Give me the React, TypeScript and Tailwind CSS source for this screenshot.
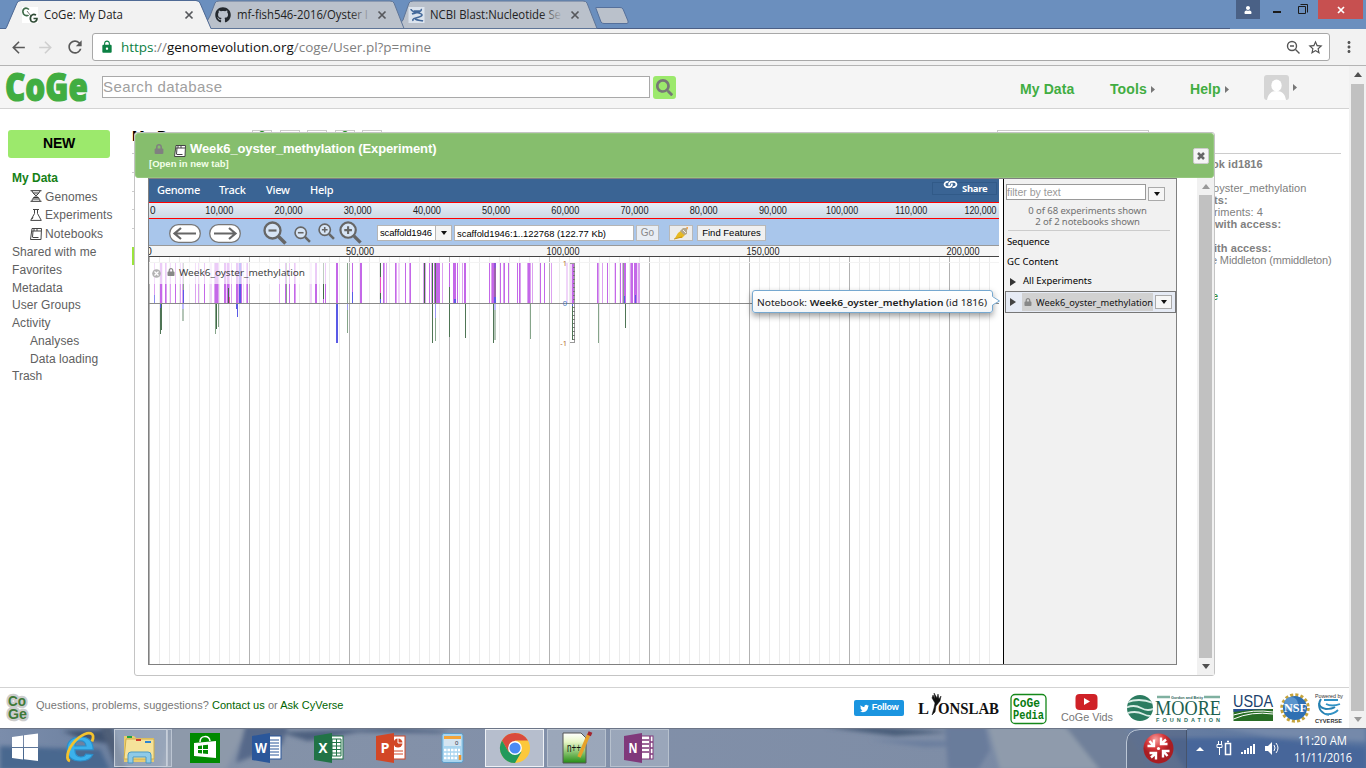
import React from "react";
import { FaLock, FaSearch, FaGithub, FaTwitter, FaUser, FaLink } from "react-icons/fa";
import { MdArrowBack, MdArrowForward, MdRefresh, MdLock, MdStarBorder, MdMoreVert } from "react-icons/md";

const ARIAL = "font-['Liberation_Sans',sans-serif]";
const SEGOE = "font-['Open_Sans',sans-serif]";
const NOTO = "font-['Noto_Sans',sans-serif]";

type FitProps = { x: number; y: number; w?: number; size: number; fill?: string; bold?: boolean; family?: string; children: string; anchor?: "start" | "middle" | "end" };
const Fit = ({ x, y, w, size, fill = "#222", bold, family = "Liberation Sans", children, anchor = "start" }: FitProps) => (
  <text x={x} y={y} fontSize={size} fill={fill} fontWeight={bold ? 700 : 400} fontFamily={`${family}, sans-serif`} textAnchor={anchor} textLength={w} lengthAdjust="spacingAndGlyphs">
    {children}
  </text>
);

function TabBar() {
  return (
    <div className="h-[29px] bg-[#6b8fbe] flex justify-between">
      <svg width="1230" height="29" viewBox="0 0 1230 29">
        <defs>
          <linearGradient id="fade1" x1="0" x2="1"><stop offset="0" stopColor="#bac1cb" stopOpacity="0" /><stop offset="1" stopColor="#bac1cb" /></linearGradient>
        </defs>
        <path d="M0 28.500H1230" stroke="#4b5f86" />
        <path d="M396 28.500 403 20 409 3 Q410 1 413 1 H583 Q586 1 587 3 L597 28.500Z" fill="#bac1cb" stroke="#5f7597" />
        <path d="M203 28.500 210 16 215 3 Q216 1 219 1 H390 Q393 1 394 3 L404 28.500Z" fill="#bac1cb" stroke="#5f7597" />
        <path d="M0 29 H6 L17 3 Q18 1 21 1 H196 Q199 1 200 3 L211 29 Z" fill="#f2f2f2" />
        <path d="M0 28.500 H6 L17 3 Q18 .500 21 .500 H196 Q199 .500 200 3 L211 28.500" fill="none" stroke="#4f6a95" />
        <path d="M6.500 28.500H210" stroke="#f2f2f2" strokeWidth="1.500" />
        <path d="M596 8.500 Q595 7.500 597 7.500 H620 Q622 7.500 623 9 L628 21 Q628.500 23.500 627 23.500 H604 Q602 23.500 601 22Z" fill="#bac1cb" stroke="#55709b" />
        <rect x="22" y="7" width="16" height="16" fill="#fff" />
        <path d="M29 9.500 C25 6 21.500 10 23.500 14 C25 16 28 16 28.500 15" fill="none" stroke="#3f6b4a" strokeWidth="1.600" />
        <path d="M27 11l4 5" stroke="#777" />
        <path d="M36 15 C32 13 29 17 31 21 C33 23 37 22 37 18.500 H33.500" fill="none" stroke="#2f4b35" strokeWidth="1.600" />
        <Fit x={44} y={19} w={79} size={12} family="Open Sans" fill="#222">CoGe: My Data</Fit>
        <Fit x={237} y={19} w={131} size={12} family="Open Sans">mf-fish546-2016/Oyster I</Fit>
        <Fit x={430} y={19} w={131} size={12} family="Open Sans">NCBI Blast:Nucleotide Se</Fit>
        <rect x="350" y="5" width="22" height="20" fill="url(#fade1)" />
        <rect x="541" y="5" width="22" height="20" fill="url(#fade1)" />
        {[189, 382, 575].map((x) => (
          <path key={x} d={`M${x - 3.500} 11.500l7 7m0-7l-7 7`} stroke="#56585c" strokeWidth="1.700" />
        ))}
        <rect x="408.500" y="7" width="16" height="16" fill="#dce4ee" />
        <path d="M411 9c0 4 11 3 11 6s-11 2-9 6M421 9c2 3-7 4-9 5m2-3h7m-6 8c3 2 6 1 8 2" stroke="#44699a" strokeWidth="1.600" fill="none" />
        <g transform="translate(215 7)"><FaGithub size={16} color="#24292e" /></g>
      </svg>
      <div className="flex items-start">
        <div className="w-6 h-[19px] bg-[#4a6186] grid place-items-center mr-2.5"><FaUser size={8} color="white" /></div>
        <svg width="48" height="19"><path d="M3 12H11" stroke="#1b1b1b" strokeWidth="2" /><path d="M28.500 6.500h7v7h-7zM30.500 4.500h7v8" fill="none" stroke="#1b1b1b" /></svg>
        <div className={`w-[45px] h-[19px] bg-[#c75050] text-white grid place-items-center mr-[3px] ${SEGOE}`}>
          <svg width="8" height="8"><path d="M1 1l6 6m0-6L1 7" stroke="white" strokeWidth="1.700" /></svg>
        </div>
      </div>
    </div>
  );
}

function Toolbar() {
  return (
    <div className="h-[37px] bg-[#f2f2f2] border-b border-[#b4b4b4] flex items-center pl-[9px]">
      <MdArrowBack size={19} color="#5a5a5a" />
      <MdArrowForward size={19} color="#cfcfcf" className="ml-[8px]" />
      <MdRefresh size={20} color="#5a5a5a" className="ml-2.5" />
      <div className="ml-[7px] w-[1238px] h-7 bg-white border border-[#a8a8a8] rounded-[3px] flex items-center pl-[7px] pr-[5px]">
        <MdLock size={14} color="#0b8043" />
        <svg width="320" height="24" className="ml-[6px]">
          <text x="1" y="17" fontSize="13.500" fontFamily="Open Sans, sans-serif" fill="#808080" textLength="310" lengthAdjust="spacingAndGlyphs">
            <tspan fill="#0b8043">https</tspan>://<tspan fill="#111">genomevolution.org</tspan>/coge/User.pl?p=mine
          </text>
        </svg>
        <div className="grow" />
        <svg width="15" height="15" viewBox="0 0 15 15" fill="none" stroke="#555" strokeWidth="1.400"><circle cx="6" cy="6" r="4.500" /><path d="M9.500 9.500l4 4M4 6h4" /></svg>
        <MdStarBorder size={17} color="#505050" className="ml-1.5" />
      </div>
      <MdMoreVert size={18} color="#555" className="ml-[10px]" />
    </div>
  );
}

const Tri = () => <svg width="4" height="7"><path d="M0 0 4 3.500 0 7z" fill="#777" /></svg>;

function AppHeader() {
  return (
    <div className={`h-[43px] bg-[#f5f5f5] border-b border-[#d3d3d3] flex items-start ${ARIAL}`}>
      <svg width="98" height="42" className="overflow-visible">
        <text x="5" y="34.500" fontSize="39" fontWeight="800" fontFamily="Open Sans, sans-serif" fill="#41ad41" stroke="#41ad41" strokeWidth="1.200" paintOrder="stroke" textLength="83" lengthAdjust="spacingAndGlyphs">CoGe</text>
      </svg>
      <div className="ml-1 mt-[10px] w-[548px] h-[22px] bg-white border border-[#a9a9a9] text-[15px] leading-[20px] tracking-[0.400px] text-[#a0a0a0]">Search database</div>
      <div className="ml-[3px] mt-[10px] w-[23px] h-[23px] rounded-[3px] bg-[#9ce96c] grid place-items-center"><FaSearch size={17} color="#777" /></div>
      <div className="ml-[344px] mt-3 flex items-center text-[14px] font-bold text-[#41ad41] leading-5">
        <span className="w-[90px] tracking-[0.100px]">My Data</span>
        <span className="w-[80px] flex items-center gap-1 tracking-[0.100px]">Tools<Tri /></span>
        <span className="w-[74px] flex items-center gap-1 tracking-[0.100px]">Help<Tri /></span>
        <span className="flex items-center gap-[4px] -mt-[3px]">
          <svg width="25" height="25"><rect width="25" height="25" rx="3" fill="#d5d5d5" /><ellipse cx="12.500" cy="10.500" rx="5.200" ry="6" fill="#fff" /><path d="M3 25c1-6 4-9 9.500-9s8.500 3 9.500 9z" fill="#fff" /></svg>
          <Tri />
        </span>
      </div>
    </div>
  );
}

const NotebookIcon = ({ c = "#444", bg = "none" }: { c?: string; bg?: string }) => (
  <svg width="12" height="12" viewBox="0 0 12 12" fill={bg} stroke={c}><path d="M2 .5h9.500L11 11.500H.5L2 .5" /><path d="M2 3h9M4 .5v2.500M7 .5v2.500M2.500 9.500h6M3 3 2.500 9" fill="none" /></svg>
);
const GenomeIcon = () => <svg width="12" height="12" fill="none" stroke="#333"><path d="M.5.700h11M.5 11.300h11M2 1c1 4 8 6 8 10M10 1c-1 4-8 6-8 10M3 3h6M3 9h6M3.500 7.500h5" /></svg>;
const FlaskIcon = () => <svg width="12" height="12" fill="none" stroke="#444"><path d="M3 .5h6M4.500.5v4L.7 11.400h10.600L7.500 4.500v-4M3 8l-1 2" /></svg>;

function Sidebar() {
  return (
    <div className={`w-[132px] shrink-0 ${ARIAL}`}>
      <div className="ml-2 mt-[21px] w-[102px] h-7 rounded-[3px] bg-[#9ce96c] text-black text-[14px] font-bold text-center leading-[27px]"><span className="tracking-[-0.300px]">NEW</span></div>
      <div className="mt-[10px] pl-3 text-[12px] text-[#606060] whitespace-nowrap">
        <div className="h-[18px] leading-5 font-bold text-[#158015]">My Data</div>
        <div className="h-[19px] flex items-center gap-[3px] pl-[18px]"><GenomeIcon /><span className="pt-[3px] tracking-[0.080px]">Genomes</span></div>
        <div className="h-[19px] flex items-center gap-[3px] pl-[18px]"><FlaskIcon /><span className="pt-px tracking-[0.080px]">Experiments</span></div>
        <div className="h-[19px] flex items-center gap-[3px] pl-[18px]"><NotebookIcon /><span className="pt-px tracking-[0.080px]">Notebooks</span></div>
        {["Shared with me", "Favorites", "Metadata", "User Groups", "Activity"].map((t) => <div key={t} className="h-[17.800px] leading-[18px] tracking-[0.080px]">{t}</div>)}
        {["Analyses", "Data loading"].map((t) => <div key={t} className="h-[17.800px] leading-[18px] pl-[18px] tracking-[0.080px]">{t}</div>)}
        <div className="leading-[17px]">Trash</div>
      </div>
    </div>
  );
}

function Behind() {
  return (
    <>
      <div className={`w-[866px] flex items-start pt-[20px] ${ARIAL}`}>
        <div className="w-[5px]">
          <div className="-mt-px text-[15px] font-bold leading-4 text-black h-[25px] whitespace-nowrap">My D</div>
          {[0, 1, 2, 3, 4].map((i) => <div key={i} className="h-[18.800px] border-t border-[#ccc]" />)}
          <div className="h-[18px] bg-[#9be43c]" />
        </div>
        <div className="ml-[115px] mt-px flex gap-[7.500px]">
          {[0, 1, 2, 3, 4].map((i) => <div key={i} className="w-5 h-4 border border-[#ccc] flex justify-center">{(i === 0 || i === 3) && <i className="block w-[6px] h-2 border-t-2 border-[#188a18] rounded-t" />}</div>)}
        </div>
      </div>
      <div className={`w-[351px] pt-[21px] text-[11px] text-[#808080] whitespace-nowrap ${ARIAL}`}>
        <div className="w-[152px] h-[22px] ml-[-1px] border border-[#ccc]" />
        <div className="ml-[200px] mt-px border-t border-[#ccc] w-[143px]" />
        <div className="ml-[216px] leading-[12px] pt-[4px] tracking-[0.060px]">
          <div className="font-bold -ml-[2px]">ok id1816</div>
          <div className="mt-3 -ml-[1px]">oyster_methylation</div>
          <div className="font-bold">ts:</div>
          <div>riments: 4</div>
          <div className="font-bold ml-px">with access:</div>
          <div className="font-bold mt-3">ith access:</div>
          <div className="-ml-[3px] tracking-[-0.150px]">e Middleton (mmiddleton)</div>
          <div className="text-[#158015] mt-6 -ml-[2px]">e</div>
        </div>
      </div>
    </>
  );
}

const S = "#c468e8", L = "#dca2f0", P = "#f0d5f9", G = "#4f7555", LG = "#b4c5b7", MG = "#86a58a", B = "#5a5ae6", D = "#416b48";
const up: [number, number, string][] = [
  [154, 1, L], [160, 2, S], [162, 1, P], [165, 1, S], [166, 1, L], [170, 1, L], [175, 1, S], [180, 1, L], [182, 1, L], [183, 1, MG], [195, 1, L], [198, 1, L], [204, 1, S], [210, 2, P],
  [214, 1, L], [215, 3, S], [218, 1, L], [224, 2, S], [226, 1, P], [227, 2, S], [229, 1, L], [231, 1, L], [236, 2, S], [238, 1, L], [239, 2, B], [241, 1, S], [243, 1, P], [246, 1, L], [247, 1, S],
  [279, 1, L], [285, 1, S], [286, 1, MG], [289, 1, S], [294, 1, S], [295, 1, L], [310, 2, P], [315, 2, S], [323, 1, D], [325, 1, S], [336, 2, S], [347, 1, MG], [352, 1, S], [360, 2, S],
  [380, 1, D], [383, 1, S], [384, 1, L], [386, 1, L], [395, 1, S], [396, 1, L], [398, 2, P], [405, 1, S], [409, 1, L], [410, 1, S], [423, 1, L], [424, 1, D], [425, 1, L], [429, 1, S], [431, 1, L], [432, 1, D],
  [434, 1, S], [435, 1, G], [436, 4, S], [442, 1, L], [449, 1, S], [453, 3, S], [457, 1, S], [462, 1, L], [464, 2, S], [489, 1, S], [491, 1, L], [492, 2, S], [494, 2, "#9b64ac"], [500, 1, S], [503, 1, L], [504, 1, S], [508, 1, S],
  [517, 1, S], [519, 1, S], [520, 1, L], [527, 1, L], [528, 2, S], [530, 1, L], [532, 1, L], [540, 1, S], [544, 1, S], [551, 1, L], [566, 2, P], [570, 2, P], [572, 3, S],
  [597, 1, S], [598, 1, L], [602, 1, L], [607, 1, S], [614, 1, P], [615, 1, S], [620, 1, S], [622, 1, L], [623, 1, MG], [624, 2, S], [630, 1, L], [631, 2, S], [634, 1, S], [635, 2, S], [637, 1, P], [638, 2, L],
];
const down: [number, number, number, string][] = [
  [160, 1, 334, G], [161, 1, 330, G], [182, 2, 321, LG], [215, 1, 334, MG], [216, 1, 329, D], [218, 1, 327, MG], [236, 1, 309, B], [237, 1, 317, B], [336, 2, 343, B], [347, 1, 333, MG],
  [432, 1, 343, G], [435, 1, 341, MG], [449, 1, 337, G], [465, 1, 338, G], [493, 1, 343, G], [494, 2, 340, LG], [530, 1, 339, MG], [572, 1, 340, G], [598, 1, 343, MG], [625, 1, 328, G],
];
const spots: [number, number, number, number, string][] = [
  [154, 295, 1, 8, "#8a8af0"], [183, 290, 1, 13, B], [228, 288, 1, 15, D], [229, 297, 1, 6, "#e650b4"], [323, 299, 1, 4, S], [352, 292, 1, 11, B], [380, 277, 1, 16, "#ea50c0"], [380, 299, 1, 4, B],
  [449, 287, 1, 16, G], [454, 299, 2, 4, B], [494, 263, 2, 5, "#8e55d8"], [494, 297, 2, 6, B], [624, 296, 1, 7, B], [635, 295, 1, 8, B], [160, 304, 1, 4, B], [182, 304, 2, 5, "#bcbcff"], [347, 304, 1, 6, "#9a9af2"], [435, 304, 1, 14, "#9a9af2"], [494, 304, 2, 6, "#bcbcff"], [572, 304, 1, 2, B],
];
const ticks = Array.from({ length: 19 }, (_, i) => 267 + i * 4);

function TrackChart() {
  return (
    <svg width="850" height="407" viewBox="149 257 850 407" shapeRendering="crispEdges" className="block bg-white">
      {Array.from({ length: 85 }, (_, i) => <rect key={i} x={149 + i * 10} y="257" width="1" height="408" fill={i % 10 ? "#ebebeb" : "#b2b2b2"} />)}
      <rect x="149" y="262" width="850" height="1" fill="#f3f3f3" />
      {up.map(([x, w, c]) => <rect key={x} x={x} y="263" width={w} height="40" fill={c} />)}
      {down.map(([x, w, b, c]) => <rect key={x} x={x} y="304" width={w} height={b - 304} fill={c} />)}
      {spots.map(([x, y, w, h, c], i) => <rect key={i} x={x} y={y} width={w} height={h} fill={c} />)}
      <rect x="149" y="303" width="850" height="1" fill="#8a8a8a" />
      <rect x="574" y="263" width="1" height="80" fill="#999" />
      <rect x="570" y="263" width="5" height="1" fill="#999" /><rect x="570" y="342" width="5" height="1" fill="#999" />
      {ticks.map((y) => <rect key={y} x="573" y={y} width="2" height="1" fill="#777" />)}
      <Fit x={567} y={266} size={7.500} anchor="end" fill="#b06b35" family="Noto Sans">1</Fit>
      <Fit x={567} y={305.500} size={7.500} anchor="end" fill="#3f78c0" family="Noto Sans">0</Fit>
      <Fit x={567} y={345.500} size={7.500} anchor="end" fill="#b06b35" family="Noto Sans">-1</Fit>
      <rect x="149" y="263" width="180" height="21" fill="#fff" fillOpacity=".66" />
      <g shapeRendering="auto">
        <circle cx="156.500" cy="273.500" r="4.300" fill="#b3b3b3" />
        <path d="M154.500 271.500l4 4m0-4l-4 4" stroke="#fff" strokeWidth="1.300" />
        <g transform="translate(167 268)"><FaLock size={8} color="#888" /></g>
        <Fit x={179} y={276} w={126} size={9.500} fill="#444" family="Noto Sans">Week6_oyster_methylation</Fit>
      </g>
    </svg>
  );
}

const Mag = ({ s, plus }: { s: number; plus?: boolean }) => (
  <svg width={s} height={s} viewBox="0 0 24 24" fill="none" stroke="#666"><circle cx="9.500" cy="9.500" r="8" strokeWidth="2.300" fill="#d7e5f6" /><path d="M15.500 15.500l7 7" strokeWidth="3.500" /><path d={plus ? "M5.500 9.500h8M9.500 5.500v8" : "M5.500 9.500h8"} strokeWidth="2.200" /></svg>
);
const Pill = ({ flip }: { flip?: boolean }) => (
  <svg width="32" height="19" viewBox="0 0 32 19" className={flip ? "-scale-x-100" : ""}><rect x=".7" y=".7" width="30.600" height="17.600" rx="8.800" fill="#fff" stroke="#777" strokeWidth="1.300" /><path d="M27 9.500H6M12 4 5.500 9.500 12 15" fill="none" stroke="#666" strokeWidth="2.200" /></svg>
);
const Down = () => <svg width="6" height="4"><path d="M0 0h6L3 4z" fill="#111" /></svg>;
const DropBtn = () => <div className="w-[17px] h-[14px] border border-[#aaa] bg-[#f6f6f6] grid place-items-center"><Down /></div>;

function Browser() {
  return (
    <div className="w-[850px] shrink-0">
      <div className={`h-[23px] bg-[#3a6494] text-white text-[11px] font-medium tracking-[-0.280px] leading-[22px] flex pl-2 ${NOTO}`}>
        <span className="w-[62px]">Genome</span><span className="w-[47px]">Track</span><span className="w-[44px]">View</span><span>Help</span>
        <div className="ml-auto w-[65px] h-[13px] mt-[3px] border border-[#315a88] flex mr-[2px] pl-[11px]">
          <FaLink size={13} className="-mt-[5px] rotate-45 scale-90" />
          <span className="ml-[5px] text-[9.500px] font-bold leading-[12px]">Share</span>
        </div>
      </div>
      <svg width="850" height="17" viewBox="149 202 850 17" className="block">
        <defs><linearGradient id="ov" x2="0" y2="1"><stop stopColor="#e5eef8" /><stop offset="1" stopColor="#ccd9e5" /></linearGradient></defs>
        <rect x="149" y="202" width="850" height="17" fill="#f00" /><rect x="149" y="203" width="850" height="15" fill="url(#ov)" />
        <Fit x={150} y={214} size={10}>0</Fit>
        {Array.from({ length: 12 }, (_, i) => <Fit key={i} x={219.300 + i * 69.200} y={214} size={10} w={i < 9 ? 28 : 32} anchor="middle">{`${i + 1}0,000`}</Fit>)}
      </svg>
      <div className={`h-[26px] bg-[#a9c6eb] flex items-center pl-5 pt-[2px] text-[9.500px] text-black whitespace-nowrap ${ARIAL}`}>
        <Pill /><div className="w-2" /><Pill flip />
        <div className="flex items-center ml-[22px]"><Mag s={24} /><div className="w-[7px]" /><div className="pt-[3px]"><Mag s={17} /></div><div className="w-[7px]" /><div className="pb-[3px]"><Mag s={17} plus /></div><div className="w-1" /><div className="pb-[2px]"><Mag s={23} plus /></div></div>
        <div className="ml-[15px] w-[75px] h-4 bg-white border border-[#b5b5b5] flex"><span className="w-[57px] pl-[2px] leading-[14px] tracking-[-0.150px]">scaffold1946</span><span className="w-4 border-l border-[#b5b5b5] bg-[#f4f4f4] grid place-items-center"><Down /></span></div>
        <div className="ml-[2px] w-[180px] h-4 bg-white border border-[#b5b5b5] pl-[2px] leading-[15px]"><svg width="156" height="14" className="block"><Fit x={0} y={10.500} w={149} size={9.500} fill="#000">scaffold1946:1..122768 (122.77 Kb)</Fit></svg></div>
        <div className="ml-[2px] w-[23px] h-4 border border-[#bbb] bg-[#e8edf4] text-[#888] text-[10px] text-center leading-[14px]">Go</div>
        <div className="ml-[10px] w-6 h-4 border border-[#b8b8b8] bg-[#ececec] grid place-items-center">
          <svg width="15" height="13"><path d="M1 11 4 6 8 3l4 4-4 4z" fill="#e7b923" /><path d="M6 4 9 1h4v6l-3 1z" fill="#b4a78c" /><path d="M9 3l3 3" stroke="#eee" /><path d="M12 0h2v3z" fill="#f8a548" /><path d="M0 12 8 10" stroke="#c9950e" /></svg>
        </div>
        <div className="ml-1 w-[69px] h-4 border border-[#b8b8b8] bg-[#f0f0f0] text-[9.500px] text-center leading-[14px]">Find Features</div>
      </div>
      <svg width="850" height="12" viewBox="149 245 850 12" className="block">
        <rect x="149" y="245" width="850" height="12" fill="#f6f6f6" /><path d="M149 245.500h850" stroke="#999" /><path d="M149 256.500h850" stroke="#444" />
        <Fit x={149} y={255} size={10} anchor="middle">0</Fit>
        {[50, 100, 150, 200].map((v, i) => <Fit key={v} x={[360, 563, 763, 963][i]} y={255} size={10} w={i ? 33 : 28} anchor="middle">{`${v},000`}</Fit>)}
      </svg>
      <TrackChart />
    </div>
  );
}

function TrackPanel() {
  return (
    <div className={`w-[173px] shrink-0 ml-1 bg-[#f1f1f1] border-l border-black text-black text-[9.500px] ${NOTO}`}>
      <div className="flex pl-[2px] pt-[5px] items-start">
        <div className={`w-[140px] h-4 border border-[#999] bg-white text-[#999] text-[10.500px] leading-[15px] ${ARIAL}`}>filter by text</div>
        <div className="ml-[2px] mt-[3px]"><DropBtn /></div>
      </div>
      <div className="mt-1 text-center text-[#707070] leading-[11px] pr-[3px] h-[26px] border-b border-[#ccc] ml-1 mr-[6px] tracking-[-0.080px]">0 of 68 experiments shown<br />2 of 2 notebooks shown</div>
      <div className="pl-[3px] h-5 leading-[21px] tracking-[-0.130px]">Sequence</div>
      <div className="pl-[3px] h-5 leading-[21px]">GC Content</div>
      <div className="pl-1.5 h-5 flex items-center tracking-[-0.050px] pt-px"><svg width="6" height="8"><path d="M0 0 6 4 0 8z" fill="#333" /></svg><span className="ml-[7px]">All Experiments</span></div>
      <div className="h-[22px] ml-px border border-[#777] bg-[#e6ebf5] flex items-center pl-1 whitespace-nowrap">
        <svg width="6" height="8" className="shrink-0"><path d="M0 0 6 4 0 8z" fill="#444" /></svg>
        <div className="ml-1.5 w-[131px] h-[18px] bg-[#d1d1d1] flex items-center pl-[2px] shrink-0"><FaLock size={8} color="#888" /><svg width="118" height="16" className="ml-1"><Fit x={0} y={11.500} w={117} size={9.500} fill="#111" family="Noto Sans">Week6_oyster_methylation</Fit></svg></div>
        <div className="ml-[2px] shrink-0"><DropBtn /></div>
      </div>
    </div>
  );
}

function Modal() {
  return (
    <div className="absolute left-[134px] top-[132px] w-[1081px] h-[544px] bg-white border border-[#c4c4c4] rounded-[3px] flex flex-col">
      <div className={`h-[45px] shrink-0 bg-[#86be6d] border border-[#95c77e] rounded-[3px] flex text-white font-bold ${ARIAL}`}>
        <div className="grow pl-[13px] pt-[6px]">
          <div className="h-[18px] flex items-center"><FaLock size={10} color="#808080" className="ml-[5px]" /><span className="ml-[10px] mt-[3px]"><NotebookIcon c="#444" bg="#fff" /></span><span className="ml-1 text-[13px] leading-4 tracking-[-0.110px]">Week6_oyster_methylation (Experiment)</span></div>
          <div className="text-[9.500px] leading-[12px] text-[#f2ffe8]">[Open in new tab]</div>
        </div>
        <div className="w-4 h-4 mt-[14px] mr-[4px] bg-[#f5f5f5] border border-[#ccc] rounded-[2px] grid place-items-center"><svg width="8" height="8"><path d="M1 1l6 6m0-6L1 7" stroke="#666" strokeWidth="2.500" /></svg></div>
      </div>
      <div className="flex grow min-h-0">
        <div className="ml-[13px] w-[1029px] h-[487px] border border-[#808080] flex">
          <Browser />
          <TrackPanel />
        </div>
        <div className="ml-auto w-[17px] bg-[#f1f1f1] flex flex-col items-center justify-between py-[6px]">
          <svg width="8" height="5"><path d="M0 5h8L4 0z" fill="#999" /></svg>
          <div className="w-[13px] grow my-[6px] bg-[#c1c1c1]" />
          <svg width="8" height="5"><path d="M0 0h8L4 5z" fill="#505050" /></svg>
        </div>
      </div>
    </div>
  );
}

function Tooltip() {
  return (
    <div className={`absolute left-[752px] top-[290px] w-[248px] h-6 ${NOTO}`}>
      <div className="w-[241px] h-[23px] bg-gradient-to-b from-white to-[#f4f6f8] border border-[#76a8d0] rounded-[3px] shadow-[0_3px_6px_rgba(0,0,0,0.4)]">
        <svg width="239" height="21" className="block"><text x="4" y="15" fontSize="9.500" fontFamily="Noto Sans, sans-serif" fill="#222" textLength="230" lengthAdjust="spacingAndGlyphs">Notebook: <tspan fontWeight="600">Week6_oyster_methylation</tspan> (id 1816)</text></svg>
      </div>
      <svg className="absolute left-[240px] top-[5px]" width="9" height="12"><path d="M0 0h1v1L8 6 1 10v2H0z" fill="#fff" /><path d="M.5 0v1.500L7.500 6 .5 10v2" fill="none" stroke="#76a8d0" /></svg>
    </div>
  );
}

function Footer() {
  return (
    <div className={`h-[41px] shrink-0 border-t border-[#d3d3d3] flex items-center text-[11px] text-[#777] whitespace-nowrap ${ARIAL}`}>
      <svg width="30" height="38" className="ml-1">
        <g stroke="#cdcdcd" strokeWidth="4.500" strokeLinejoin="round" paintOrder="stroke"><Fit x={4} y={17} w={18} size={14.500} bold fill="#3f7a39">Co</Fit><Fit x={4} y={30} w={19} size={14.500} bold fill="#3f7a39">Ge</Fit></g>
      </svg>
      <span className="ml-[2px] -mt-[6px] w-[818px] tracking-[0.030px]">Questions, problems, suggestions? <span className="text-[#006400]">Contact us</span> or <span className="text-[#006400]">Ask CyVerse</span></span>
      <div className="w-[50px] h-4 bg-[#1b95e0] rounded-[2px] text-white text-[9px] font-bold tracking-[-0.300px] flex items-center justify-center gap-[3px]"><FaTwitter size={9} />Follow</div>
      <svg width="445" height="40" viewBox="904 688 445 40">
        <Fit x={918} y={714} w={11} size={17} bold fill="#111" family="Liberation Serif">L</Fit>
        <Fit x={938} y={714} w={61} size={17} bold fill="#111" family="Liberation Serif">ONSLAB</Fit>
        <path d="M935 703l-3-5 1-3 2 4-1-6 3 5 1-4 1 5 2-3-1 5-4 5-1 6-3 3 2-7z" stroke="#111" strokeWidth=".5" fill="#111" />
        <rect x="1011" y="694.500" width="35" height="29" rx="4" fill="#fff" stroke="#15881a" strokeWidth="1.300" />
        <Fit x={1013} y={707} w={27} size={12.500} bold fill="#087c10" family="Liberation Mono">CoGe</Fit>
        <Fit x={1013} y={719} w={31} size={12.500} bold fill="#087c10" family="Liberation Mono">Pedia</Fit>
        <rect x="1075.500" y="694" width="22" height="16" rx="4" fill="#cf2127" /><path d="M1084 698v7l6-3.500z" fill="#fff" />
        <Fit x={1061} y={721} w={52} size={11.500} fill="#777">CoGe Vids</Fit>
        <clipPath id="moore"><circle cx="1140" cy="708" r="13" /></clipPath>
        <g clipPath="url(#moore)"><rect x="1126" y="694" width="28" height="28" fill="#2b7b60" /><path d="M1125 703q14-6 28 0M1125 708q9-4 16 0t14 0M1125 714q10-4 18 0t12 0" stroke="#d9ece5" strokeWidth="1.800" fill="none" /></g>
        <path d="M1157 697h13M1204 697h16" stroke="#7fb0a0" strokeWidth="2.500" /><Fit x={1171} y={698.500} w={32} size={4} bold fill="#2a665a">Gordon and Betty</Fit>
        <g stroke="#fff" strokeWidth="2" paintOrder="stroke"><Fit x={1155} y={715} w={66} size={20} fill="#1c5f50" family="Liberation Serif">MOORE</Fit></g>
        <text x="1156" y="721.500" fontSize="5.500" fill="#276f5c" fontFamily="Liberation Sans, sans-serif" fontWeight="700" textLength="64" lengthAdjust="spacing">FOUNDATION</text>
        <Fit x={1233} y={707} w={40} size={16.500} fill="#203f6b">USDA</Fit>
        <path d="M1233.500 709h39.500v12h-39.500z" fill="#286d25" /><path d="M1233.500 715q20-6 39.500-3M1233.500 719q18-8 39.500-5" stroke="#fff" fill="none" /><path d="M1233.500 709h39.500q-20 0-39.500 3z" fill="#294f91" />
        <circle cx="1295" cy="708" r="13" fill="none" stroke="#c6a43c" strokeWidth="3.500" strokeDasharray="3 2.100" /><circle cx="1295" cy="708" r="12" fill="#2f70b3" /><circle cx="1291" cy="704" r="7" fill="#5b95cd" />
        <Fit x={1284} y={712} w={23} size={12} bold fill="#fff" family="Liberation Serif">NSF</Fit>
        <Fit x={1315} y={698} w={28} size={6} fill="#333">Powered by</Fit>
        <g fill="none" stroke="#2680b1"><path d="M1321 699q-5 8 5 10 6 0 9-2" strokeWidth="2" /><path d="M1319 703q-1 10 10 12" strokeWidth="1.500" /><path d="M1324 700h14M1326 704q6 3 14 0M1325 714q8 1 13-4" stroke="#3292c4" strokeWidth="1.800" /></g>
        <Fit x={1315} y={722.500} w={27} size={5.500} bold fill="#333">CYVERSE</Fit>
      </svg>
    </div>
  );
}

const Office = ({ x, c, t, kind }: { x: number; c: string; t: string; kind: number }) => (
  <g>
    <rect x={x + 14} y="8" width="15" height="23" fill="#fff" stroke={c} />
    {kind === 0 && <path d={`M${x + 17} 12h10m-10 3h10m-10 3h10m-10 3h10m-10 3h10m-10 3h10`} stroke={c} />}
    {kind === 1 && <path d={`M${x + 18} 11h9v17h-9zm0 3.500h9m-9 3.500h9m-9 3.500h9m-9 3.500h9M${x + 22.500} 11v17`} stroke={c} fill="none" />}
    {kind === 2 && <><circle cx={x + 22} cy="15" r="4.500" fill={c} /><path d={`M${x + 22} 10v5h5`} stroke="#fff" fill="none" /><path d={`M${x + 17} 23h10m-10 3h10`} stroke={c} /></>}
    {kind === 3 && <path d={`M${x + 18} 12h7m-7 4h7m-7 4h7m-7 4h7M${x + 26} 8v23m0-17h3m-3 6h3m-3 6h3`} stroke={c} strokeWidth="1.500" />}
    <path d={`M${x} 8 ${x + 18} 5v30L${x} 32z`} fill={c} />
    <Fit x={x + 9} y={25} size={14} w={kind === 0 ? 12 : 9} bold fill="#fff" family="Open Sans" anchor="middle">{t}</Fit>
  </g>
);

function Taskbar() {
  return (
    <svg width="1366" height="40" className="block shrink-0">
      <defs>
        <linearGradient id="tb" x2="1"><stop stopColor="#7b8dab" /><stop offset=".08" stopColor="#6c809f" /><stop offset=".18" stopColor="#8492a8" /><stop offset=".4" stopColor="#8290a9" /><stop offset=".7" stopColor="#7e8da6" /><stop offset="1" stopColor="#54719e" /></linearGradient>
        <linearGradient id="np" x2="0" y2="1"><stop stopColor="#fff" /><stop offset=".3" stopColor="#e7f6c6" /><stop offset="1" stopColor="#258d15" /></linearGradient>
        <radialGradient id="ball" cx=".4" cy=".2"><stop stopColor="#f7a0a0" /><stop offset=".6" stopColor="#d63639" /><stop offset="1" stopColor="#a91d23" /></radialGradient>
        <filter id="soft"><feGaussianBlur stdDeviation="2" /></filter>
      </defs>
      <rect width="1366" height="40" fill="url(#tb)" />
      <g filter="url(#soft)">
        <path d="M0 18 50 20 100 21 110 42H0z" fill="#4a678f" /><path d="M62 3 105 2 112 16 85 12z" fill="#415270" />
        <path d="M100-2h12l15 44h-10z" fill="#4f5e78" /><path d="M172-2h78l-12 18-12 26h-65z" fill="#8d99aa" /><path d="M245-2h43l-6 19-46 18z" fill="#56698a" />
        <path d="M280 4l115-4 55 3-12 2-80-1-50 9z" fill="#4d607f" /><path d="M825-1h50l75 5-55 4z" fill="#4a5d79" />
        <path d="M870 12l70 1 45 4-60 2z" fill="#6b7e9e" /><path d="M945-2h40l5 24-12 20h-30z" fill="#697c9b" /><path d="M988-2h75l62 44h-125z" fill="#8f9bac" /><path d="M1065-2h60l25 44h-50z" fill="#6f809a" />
        <path d="M1165 10h100l101 10v22h-180z" fill="#46669a" /><path d="M1210-2h156v16l-100-6z" fill="#7489aa" />
      </g>
      <path d="M0 .5h1366" stroke="#6c7587" />
      <path d="M12 9 23 7.500V19H12zM24 7.300 38 5.500V19H24zM12 20h11v11.500L12 30zM24 20h14v13l-14-1.700z" fill="#fff" />
      <text x="65" y="33" fontSize="44" fontWeight="700" fontFamily="Liberation Sans, sans-serif" fill="#3bb1ec" stroke="#2b8fcb" strokeWidth="1" textLength="30" lengthAdjust="spacingAndGlyphs">e</text>
      <path d="M70 33C64 31 69 17 79 9.500s17-5 13 4" fill="none" stroke="#f3c22e" strokeWidth="2.800" />
      <rect x="167.500" y="1.500" width="4" height="37" fill="#a8b1c0" fillOpacity=".5" stroke="#bcc5d2" /><rect x="114.500" y="1.500" width="52" height="37" fill="#b3bdcc" fillOpacity=".55" stroke="#c6ced9" />
      <path d="M124 8h10l2 2h18v24h-30z" fill="#e8cc70" /><path d="M126 11h28v20h-30z" fill="#f5e29a" stroke="#d0ae48" /><path d="M127 9h5" stroke="#20a340" strokeWidth="2" /><path d="M136 12h5" stroke="#d23c2b" strokeWidth="2" /><path d="M145 14h6" stroke="#2d84cf" strokeWidth="2" />
      <path d="M128 35v-8q0-3 3-3h17q3 0 3 3v8h-5v-6h-13v6z" fill="#8ecae8" stroke="#4c99c2" />
      <rect x="190" y="5" width="30" height="30" fill="#008a00" /><path d="M194 15l22-2v17l-22-2z" fill="#fff" /><path d="M200 14c0-7 9-7 10-1" stroke="#fff" fill="none" strokeWidth="1.500" /><path d="M198 18l4-.5V21h-4zm5-.700 5-.500V21h-5zM198 22h4v3.500l-4-.500zm5 0h5v4l-5-.500z" fill="#008a00" />
      <Office x={252} c="#2b579a" t="W" kind={0} /><Office x={314} c="#217346" t="X" kind={1} /><Office x={376} c="#d24726" t="P" kind={2} />
      <rect x="442" y="5.500" width="21" height="29" rx="2" fill="#a9d5ef" stroke="#5b9cc8" /><rect x="444" y="8" width="17" height="3" fill="#f3a43a" /><rect x="444" y="11" width="17" height="7" fill="#d5e5f1" /><Fit x={455} y={17} size={6} fill="#334">0</Fit>
      <path d="M444 22h16M444 26h16M444 30h13" stroke="#fff" strokeWidth="2.500" strokeDasharray="2.500 1" /><path d="M460 27v5" stroke="#f0952c" strokeWidth="2.500" />
      <rect x="485.500" y="1.500" width="58" height="37" fill="#c7ced9" fillOpacity=".75" stroke="#eef1f5" />
      <g transform="translate(515 20)"><circle r="15" fill="#fcc83b" /><path d="M-13-7.500A15 15 0 0 1 13-7.500H0L-6.500 4z" fill="#d94b3d" /><path d="M-13-7.500A15 15 0 0 0 0 15L6.500 3.800-6.500 3.800z" fill="#229a5b" /><circle r="6.900" fill="#fff" /><circle r="5.600" fill="#4a8af4" /></g>
      <rect x="547.500" y="1.500" width="58" height="37" fill="#b3bdcc" fillOpacity=".5" stroke="#b7c1ce" /><rect x="610.500" y="1.500" width="58" height="37" fill="#b3bdcc" fillOpacity=".5" stroke="#b7c1ce" />
      <path d="M563 5h18l5 5v25h-23z" fill="url(#np)" stroke="#555" /><Fit x={567} y={24} w={14} size={13} fill="#111">n++</Fit><path d="M589 6 579 29" stroke="#e6a22a" strokeWidth="3.500" /><path d="M590.500 4l-1.500 3.500" stroke="#a12530" strokeWidth="4" />
      <Office x={624} c="#80397b" t="N" kind={3} />
      <path d="M1126 40V14Q1126 2 1140 1.500H1187V40z" fill="#53637f" fillOpacity=".55" /><path d="M1126.500 40V14Q1127 2 1140 1.500H1187" fill="none" stroke="#bcc7d6" /><path d="M1186.500 2v38" stroke="#46536b" />
      <g transform="translate(1158.500 20.500)">
        <circle r="15" fill="url(#ball)" /><circle r="1.600" fill="#fff" />
        {[0, 90, 180, 270].map((a) => <path key={a} transform={`rotate(${a})`} d="M2.500-11V-4.500H9M3-5 7.500-9" stroke="#fff" strokeWidth="2.400" fill="none" />)}
      </g>
      <path d="M1196 23h8l-4-4z" fill="#fff" />
      <g stroke="#fff" fill="none"><path d="M1225.500 15.500h5v11h-5zM1227 13.500h2" strokeWidth="1.500" /><path d="M1217 16.500h5v3h-5zM1218.500 13v3M1221.500 13v3M1219.500 20v7" /></g>
      <path d="M1241 26v-2h2v2zm3 0v-4h2v4zm3 0v-6h2v6zm3 0v-8h2v8zm3 0v-10h2v10z" fill="#fff" />
      <path d="M1265 18h3l4-4v13l-4-4h-3z" fill="#fff" /><path d="M1274 17q2 3 0 6M1276 15q4 5 0 10" fill="none" stroke="#fff" />
      <Fit x={1298} y={17} w={49} size={12} fill="#fff" family="Open Sans">11:20 AM</Fit><Fit x={1294} y={34} w={58} size={12} fill="#fff" family="Open Sans">11/11/2016</Fit>
    </svg>
  );
}

export default function App() {
  return (
    <div className="relative w-[1366px] h-[768px] overflow-hidden bg-white flex flex-col">
      <TabBar />
      <Toolbar />
      <div className="flex h-[662px] shrink-0">
        <div className="w-[1349px] flex flex-col">
          <AppHeader />
          <div className="flex grow min-h-0 overflow-hidden"><Sidebar /><Behind /></div>
          <Footer />
        </div>
        <div className="w-[17px] bg-[#f1f1f1] flex flex-col items-center py-[6px]">
          <svg width="8" height="5"><path d="M0 5h8L4 0z" fill="#505050" /></svg>
          <div className="w-[13px] h-[628px] mt-[7px] bg-[#c1c1c1]" />
          <svg width="8" height="5" className="mt-1.5"><path d="M0 0h8L4 5z" fill="#999" /></svg>
        </div>
      </div>
      <Taskbar />
      <Modal />
      <Tooltip />
    </div>
  );
}
